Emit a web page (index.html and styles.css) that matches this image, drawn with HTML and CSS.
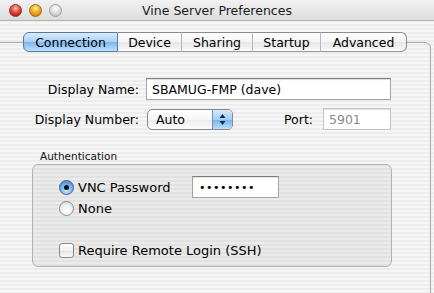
FILE: index.html
```html
<!DOCTYPE html>
<html>
<head>
<meta charset="utf-8">
<link rel="stylesheet" href="styles.css">
</head>
<body>
<div class="window">
  <div class="titlebar">
    <div class="lights">
      <span class="light red"></span>
      <span class="light yellow"></span>
      <span class="light gray"></span>
    </div>
    <div class="title">Vine Server Preferences</div>
    <div></div>
  </div>
  <div class="content">
    <div class="pane">
      <div class="tabs">
        <div class="tab sel t-conn">Connection</div>
        <div class="tab t-dev">Device</div>
        <div class="tab t-share">Sharing</div>
        <div class="tab t-start">Startup</div>
        <div class="tab t-adv">Advanced</div>
      </div>
      <div class="form">
        <div class="label">Display Name:</div>
        <div class="field name">SBAMUG-FMP (dave)</div>
        <div class="label">Display Number:</div>
        <div class="row2">
          <div class="popup">
            <span class="popup-text">Auto</span>
            <span class="popup-arrows">
              <svg width="9" height="13" viewBox="0 0 9 13"><path d="M4.5 1 L7.5 5 L1.5 5 Z" fill="#1a2a50"/><path d="M4.5 12 L7.5 8 L1.5 8 Z" fill="#1a2a50"/></svg>
            </span>
          </div>
          <div class="port">
            <span class="port-label">Port:</span>
            <div class="field port-field">5901</div>
          </div>
        </div>
      </div>
      <div class="group-label">Authentication</div>
      <div class="group">
        <div class="auth-row">
          <div class="choice"><span class="radio on"><span class="dot"></span></span><span>VNC Password</span></div>
          <div class="field pw">••••••••</div>
        </div>
        <div class="choice none"><span class="radio"></span><span>None</span></div>
        <div class="choice check-row"><span class="checkbox"></span><span>Require Remote Login (SSH)</span></div>
      </div>
    </div>
  </div>
</div>
</body>
</html>
```

FILE: styles.css
```css
* { box-sizing: border-box; }
html, body { margin: 0; padding: 0; }
body {
  width: 434px;
  height: 293px;
  overflow: hidden;
  font-family: "DejaVu Sans", "Lucida Grande", sans-serif;
  font-size: 12px;
  color: #000;
}
.window {
  width: 434px;
  height: 293px;
  overflow: hidden;
  background: repeating-linear-gradient(to bottom, #ececec 0 2px, #f6f6f6 2px 4px);
}
.titlebar {
  height: 21px;
  display: grid;
  grid-template-columns: 1fr auto 1fr;
  align-items: center;
  background: linear-gradient(to bottom, #f2f2f2, #dcdcdc);
  border-bottom: 1px solid #b4b4b4;
}
.lights {
  display: flex;
  gap: 7px;
  padding-left: 9px;
  padding-top: 1px;
}
.light {
  width: 13px;
  height: 13px;
  border-radius: 50%;
  display: block;
}
.red {
  background: radial-gradient(circle at 50% 30%, #ffd6cf 0, #f0756a 25%, #c8251c 70%, #a8160f 100%);
  border: 1px solid #9a2a22;
}
.yellow {
  background: radial-gradient(circle at 50% 30%, #fff2c0 0, #f5c040 30%, #d98a0a 75%, #b46d05 100%);
  border: 1px solid #a26a12;
}
.gray {
  background: radial-gradient(circle at 50% 30%, #ffffff 0, #e8e8e8 35%, #c4c4c4 80%, #b0b0b0 100%);
  border: 1px solid #9c9c9c;
}
.title {
  font-size: 12.5px;
  color: #1a1a1a;
  padding-top: 1px;
}
.content {
  padding-top: 21px;
}
.pane {
  margin-left: -10px;
  width: 441px;
  height: 400px;
  border: 1px solid #a6a6a6;
  border-radius: 6px;
}
.tabs {
  display: flex;
  margin-top: -11px;
  margin-left: 32px;
  height: 20px;
  width: 384px;
}
.tab {
  height: 20px;
  display: flex;
  align-items: center;
  justify-content: center;
  font-size: 12.5px;
  background: linear-gradient(to bottom, #ffffff 0, #f4f4f4 50%, #e6e6e6 51%, #fafafa 100%);
  border-top: 1px solid #8c8c8c;
  border-bottom: 1px solid #9a9a9a;
  border-right: 1px solid #b8b8b8;
}
.tab.sel {
  background: linear-gradient(to bottom, #d8ebfb 0, #a9d0f3 50%, #7cb7ef 51%, #bfe0fd 100%);
  border-color: #5878a6;
  border-left: 1px solid #5878a6;
  border-radius: 6px 0 0 6px;
}
.t-conn { width: 95px; }
.t-dev { width: 64px; }
.t-share { width: 71px; }
.t-start { width: 68px; }
.t-adv { width: 86px; border-right: 1px solid #8c8c8c; border-radius: 0 6px 6px 0; }
.form {
  margin-top: 26px;
  padding-left: 9px;
  display: grid;
  grid-template-columns: 139px 245px;
  column-gap: 7px;
  row-gap: 8px;
  align-items: center;
}
.label {
  text-align: right;
  font-size: 12.5px;
}
.field {
  height: 22px;
  background: #fff;
  border: 1px solid #a4a4a4;
  border-top-color: #7c7c7c;
  display: flex;
  align-items: center;
  padding-left: 5px;
  font-size: 12.5px;
  box-shadow: inset 0 1px 1px rgba(0,0,0,0.12);
}
.row2 {
  display: flex;
  align-items: center;
}
.popup {
  width: 86px;
  height: 21px;
  margin-left: 1px;
  border: 1px solid #8a8a8a;
  border-radius: 5px;
  background: linear-gradient(to bottom, #ffffff 0, #f6f6f6 50%, #eaeaea 51%, #fdfdfd 100%);
  display: flex;
  align-items: center;
  overflow: hidden;
}
.popup-text {
  flex: 1;
  padding-left: 8px;
  font-size: 12.5px;
}
.popup-arrows {
  width: 20px;
  height: 100%;
  display: flex;
  align-items: center;
  justify-content: center;
  background: linear-gradient(to bottom, #d6eafc 0, #a4cdf2 50%, #72b0ec 51%, #bde0fd 100%);
  border-left: 1px solid #6f8fb8;
}
.port {
  margin-left: auto;
  display: flex;
  align-items: center;
  gap: 10px;
}
.port-label { font-size: 12.5px; }
.port-field {
  width: 68px;
  color: #8a8a8a;
  border-color: #c4c4c4;
}
.group-label {
  margin-top: 20px;
  margin-left: 49px;
  font-size: 10.5px;
  line-height: 13px;
  color: #111;
}
.group {
  margin-top: 1px;
  margin-left: 41px;
  width: 360px;
  height: 103px;
  border: 1px solid #b2b2b2;
  border-radius: 6px;
  background: rgba(0,0,0,0.045);
  padding: 11px 0 0 26px;
}
.auth-row {
  display: grid;
  grid-template-columns: 133px 87px;
  align-items: center;
  height: 22px;
}
.choice {
  display: flex;
  align-items: center;
  gap: 4px;
  font-size: 13px;
  height: 18px;
}
.none { margin-top: 1px; }
.check-row { margin-top: 24px; }
.radio {
  width: 15px;
  height: 15px;
  border-radius: 50%;
  border: 1px solid #8a8a8a;
  background: radial-gradient(circle at 50% 70%, #ffffff 0, #f0f0f0 50%, #cfcfcf 100%);
  display: flex;
  align-items: center;
  justify-content: center;
  flex: none;
}
.radio.on {
  border-color: #3f5f8f;
  background: radial-gradient(circle at 50% 75%, #c8e6ff 0, #7cb8f0 45%, #3f7fcf 100%);
}
.dot {
  width: 5px;
  height: 5px;
  border-radius: 50%;
  background: #101010;
}
.checkbox {
  width: 15px;
  height: 15px;
  border: 1px solid #8a8a8a;
  border-radius: 3px;
  background: linear-gradient(to bottom, #ffffff 0, #f0f0f0 50%, #e2e2e2 51%, #fafafa 100%);
  flex: none;
}
.pw {
  font-size: 11px;
  letter-spacing: 0.5px;
  padding-left: 6px;
}
```
